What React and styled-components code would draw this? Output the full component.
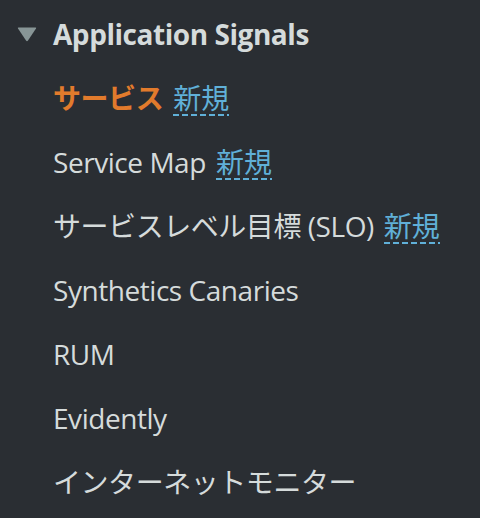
import React from "react";
import styled, { createGlobalStyle } from "styled-components";

const GlobalStyle = createGlobalStyle`
  body {
    margin: 0;
    background: #2a2e33;
  }
`;

const items = [
  { label: "サービス", active: true, isNew: true },
  { label: "Service Map", isNew: true },
  { label: "サービスレベル目標 (SLO)", isNew: true },
  { label: "Synthetics Canaries" },
  { label: "RUM" },
  { label: "Evidently" },
  { label: "インターネットモニター" },
];

const Nav = styled.nav`
  width: 480px;
  height: 518px;
  box-sizing: border-box;
  padding-top: 2px;
  background: #2a2e33;
  font-family: "Open Sans", "Noto Sans CJK JP", sans-serif;
  font-size: 28px;
  letter-spacing: -0.45px;
  color: #d5dbdb;
  overflow: hidden;
`;

const Header = styled.div`
  display: flex;
  align-items: center;
  height: 64px;
  padding-left: 17px;
  font-weight: 700;
`;

const Caret = styled.svg`
  width: 20px;
  height: 15px;
  margin-right: 16px;
  flex-shrink: 0;
`;

const List = styled.ul`
  list-style: none;
  margin: 0;
  padding: 0 0 0 53px;
`;

const Item = styled.li`
  height: 64px;
  line-height: 64px;
  white-space: nowrap;
  color: ${(p) => (p.$active ? "#e27b2c" : "#d5dbdb")};
  font-weight: ${(p) => (p.$active ? 700 : 400)};
`;

const NewBadge = styled.span`
  display: inline-block;
  margin-left: 10px;
  line-height: 32px;
  padding-bottom: 2px;
  font-weight: 400;
  letter-spacing: 0;
  color: #60b0d8;
  background-image: linear-gradient(to right, #60b0d8 6px, transparent 6px);
  background-size: 9px 2px;
  background-repeat: repeat-x;
  background-position: 0 100%;
  vertical-align: baseline;
`;

export default function App() {
  return (
    <>
      <GlobalStyle />
      <Nav>
        <Header>
          <Caret viewBox="0 0 20 15">
            <path d="M1.5 0.5 H18.5 Q19.6 0.5 19 1.5 L11 13.6 Q10 15 9 13.6 L1 1.5 Q0.4 0.5 1.5 0.5 Z" fill="#879596" />
          </Caret>
          Application Signals
        </Header>
        <List>
          {items.map((it) => (
            <Item key={it.label} $active={it.active}>
              {it.label}
              {it.isNew && <NewBadge>新規</NewBadge>}
            </Item>
          ))}
        </List>
      </Nav>
    </>
  );
}
